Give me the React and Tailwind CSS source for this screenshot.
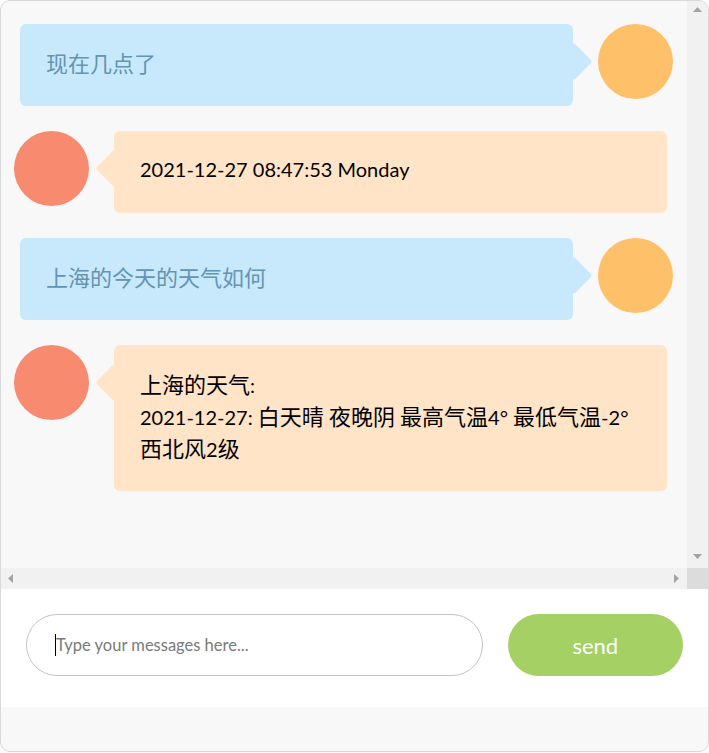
import React from "react";

const CJK = /([\u3000-\u303f\u4e00-\u9fff\uff00-\uffef]+)/;

function Mixed({ text }) {
  const parts = text.split(CJK).filter((p) => p.length > 0);
  return (
    <>
      {parts.map((p, i) =>
        CJK.test(p) ? (
          <span key={i} className="text-[22px] font-['Noto_Sans_CJK_SC',sans-serif]">
            {p}
          </span>
        ) : (
          <span key={i} className="text-[20px] font-['Lato','Noto_Sans_CJK_SC',sans-serif]">
            {p}
          </span>
        )
      )}
    </>
  );
}

function Line({ text }) {
  return (
    <div className="h-[32px] whitespace-pre leading-[27px]">
      <Mixed text={text} />
    </div>
  );
}

function RightMsg({ lines }) {
  return (
    <div className="flex items-start pl-[19px] pr-[14px]">
      <div className="relative w-[553px] rounded-[6px] bg-[#c7e9fb] py-[25px] pl-[26px] pr-[20px] text-[#6494b3]">
        {lines.map((l, i) => (
          <Line key={i} text={l} />
        ))}
        <div className="absolute top-[24px] -right-[13.5px] h-[27px] w-[27px] rotate-45 rounded-[3px] bg-[#c7e9fb]" />
      </div>
      <div className="ml-[25px] h-[75px] w-[75px] shrink-0 rounded-full bg-[#ffc06a]" />
    </div>
  );
}

function LeftMsg({ lines }) {
  return (
    <div className="flex items-start pl-[13px] pr-[20px]">
      <div className="mr-[25px] h-[75px] w-[75px] shrink-0 rounded-full bg-[#f88a70]" />
      <div className="relative w-[553px] rounded-[6px] bg-[#ffe4c8] py-[25px] pl-[26px] pr-[20px] text-black">
        {lines.map((l, i) => (
          <Line key={i} text={l} />
        ))}
        <div className="absolute top-[24px] -left-[13.5px] h-[27px] w-[27px] rotate-45 rounded-[3px] bg-[#ffe4c8]" />
      </div>
    </div>
  );
}

function Tri({ dir }) {
  const pts = {
    up: "0,5 4.5,0 9,5",
    down: "0,0 9,0 4.5,5",
    left: "5,0 5,9 0,4.5",
    right: "0,0 0,9 5,4.5",
  }[dir];
  const vertical = dir === "up" || dir === "down";
  return (
    <svg width={vertical ? 9 : 5} height={vertical ? 5 : 9} viewBox={vertical ? "0 0 9 5" : "0 0 5 9"}>
      <polygon points={pts} fill="#a3a3a3" />
    </svg>
  );
}

export default function App() {
  return (
    <div className="h-[753px] w-[709px] bg-white">
      <div className="flex h-[752px] w-[709px] flex-col overflow-hidden rounded-[10px] border border-[#d9d9d9] bg-[#f8f8f8]">
        {/* chat area */}
        <div className="flex h-[567px]">
          <div className="flex flex-1 flex-col gap-[25px] pt-[23px]">
            <RightMsg lines={["现在几点了"]} />
            <LeftMsg lines={["2021-12-27 08:47:53 Monday"]} />
            <RightMsg lines={["上海的今天的天气如何"]} />
            <LeftMsg
              lines={[
                "上海的天气:",
                "2021-12-27: 白天晴 夜晚阴 最高气温4° 最低气温-2°",
                "西北风2级",
              ]}
            />
          </div>
          <div className="flex w-[21px] flex-col items-center justify-between bg-[#f1f1f1] pt-[6px] pb-[9px]">
            <Tri dir="up" />
            <Tri dir="down" />
          </div>
        </div>
        <div className="flex h-[21px]">
          <div className="flex flex-1 items-center justify-between bg-[#f1f1f1] pl-[7px] pr-[8px]">
            <Tri dir="left" />
            <Tri dir="right" />
          </div>
          <div className="w-[21px] bg-[#dcdcdc]" />
        </div>
        {/* input area */}
        <div className="flex h-[118px] items-start gap-[25px] bg-white px-[25px] pt-[25px]">
          <div className="flex h-[62px] w-[458px] items-center rounded-full border border-[#c4c4c4] bg-white pl-[28px]">
            <span className="h-[22px] w-px bg-black" />
            <span className="text-[16.5px] text-[#7a7a7a] font-['Lato',sans-serif]">Type your messages here...</span>
          </div>
          <button className="flex h-[62px] w-[176px] items-center justify-center rounded-full bg-[#a5d063] text-[22px] text-white font-['Lato',sans-serif]">
            send
          </button>
        </div>
      </div>
    </div>
  );
}
